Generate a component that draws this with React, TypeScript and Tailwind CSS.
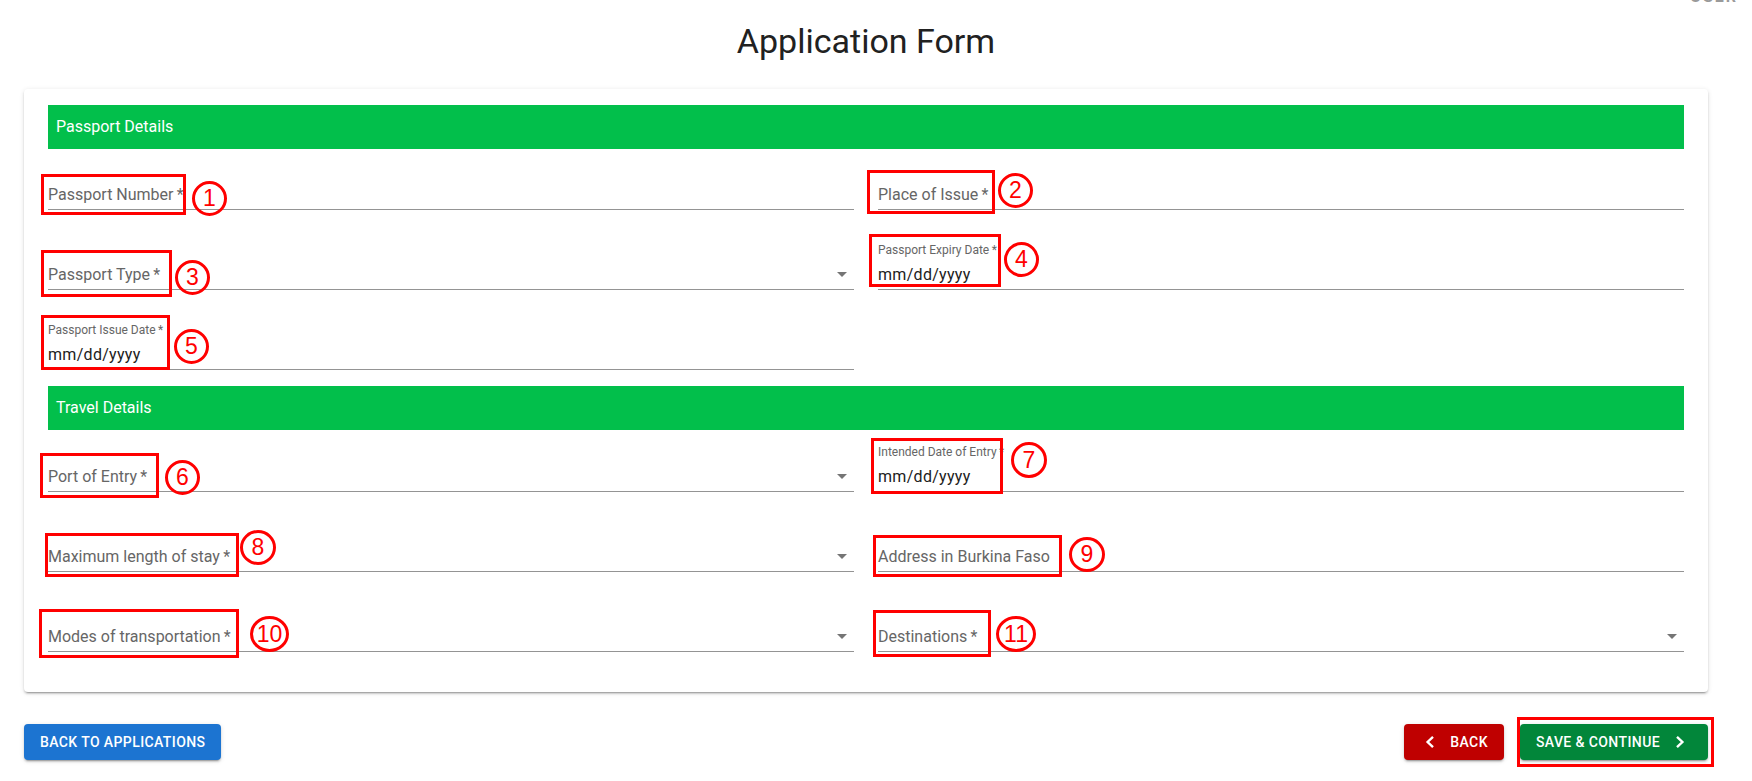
import React from "react";

type Box = { l: number; t: number; w: number; h: number };
type Circ = { l: number; t: number; w: number; h: number; n: string };

type FieldProps = {
  label: string;
  kind: "text" | "select" | "date";
  box: Box;
  circ: Circ;
};

function Field({ label, kind, box, circ }: FieldProps) {
  return (
    <div className="relative h-[61px] border-b border-[#949494] flex flex-col justify-end pb-[3px]">
      {kind === "date" && (
        <div className="text-[12px] leading-[14px] text-[#666666] mb-[6px] whitespace-nowrap">
          {label}
          {"\u2009*"}
        </div>
      )}
      <div className="flex items-center justify-between h-[23px] leading-[23px] text-[16px]">
        {kind === "date" ? (
          <span className="text-[#212121] tracking-[0.3px]">mm/dd/yyyy</span>
        ) : (
          <span className="text-[#666666] whitespace-nowrap">
            {label}
            {label !== "Address in Burkina Faso" ? "\u2009*" : ""}
          </span>
        )}
        {kind === "select" && (
          <svg width="10" height="5" viewBox="0 0 10 5" className="mr-[7px]">
            <path d="M0 0 L10 0 L5 5 Z" fill="rgba(0,0,0,0.54)" />
          </svg>
        )}
      </div>
      <div
        className="absolute border-[3px] border-[#ff0000] pointer-events-none"
        style={{ left: box.l, top: box.t, width: box.w, height: box.h }}
      />
      <div
        className="absolute rounded-[50%] border-[3px] border-[#ff0000] flex items-center justify-center text-[#ff0000] text-[23px] leading-none font-['Liberation_Sans',Arial,sans-serif] pointer-events-none"
        style={{ left: circ.l, top: circ.t, width: circ.w, height: circ.h }}
      >
        {circ.n}
      </div>
    </div>
  );
}

function Band({ title, className = "" }: { title: string; className?: string }) {
  return (
    <div className={"h-[44px] bg-[#02bf4b] flex items-center pl-2 text-white text-[16px] " + className}>
      {title}
    </div>
  );
}

const shadow =
  "shadow-[0px_3px_1px_-2px_rgba(0,0,0,0.2),0px_2px_2px_0px_rgba(0,0,0,0.14),0px_1px_5px_0px_rgba(0,0,0,0.12)]";

export default function App() {
  return (
    <div className="min-h-screen w-full bg-white font-['Roboto',sans-serif]">
      <div className="flex justify-end pr-[14px] h-[5px] overflow-hidden">
        <div className="-mt-[11px] text-[16px] leading-[16px] font-bold text-[#9a9a9a] tracking-[2px]">
          USER
        </div>
      </div>
      <div className="pl-6 pr-[44px]">
        <h1 className="mt-[15px] text-center text-[34px] leading-[42px] text-[#212121] font-normal">
          Application Form
        </h1>
        <div className={"mt-[27px] bg-white rounded-[4px] px-6 pt-4 pb-10 " + shadow}>
          <Band title="Passport Details" />
          <div className="grid grid-cols-2 gap-x-6 gap-y-[19px]">
            <Field
              label="Passport Number"
              kind="text"
              box={{ l: -7, t: 25, w: 145, h: 41 }}
              circ={{ l: 144, t: 32, w: 35, h: 35, n: "1" }}
            />
            <Field
              label="Place of Issue"
              kind="text"
              box={{ l: -11, t: 21, w: 128, h: 44 }}
              circ={{ l: 120, t: 24, w: 35, h: 35, n: "2" }}
            />
            <Field
              label="Passport Type"
              kind="select"
              box={{ l: -7, t: 21, w: 131, h: 47 }}
              circ={{ l: 127, t: 31, w: 35, h: 35, n: "3" }}
            />
            <Field
              label="Passport Expiry Date"
              kind="date"
              box={{ l: -9, t: 5, w: 132, h: 53 }}
              circ={{ l: 126, t: 13, w: 35, h: 35, n: "4" }}
            />
            <Field
              label="Passport Issue Date"
              kind="date"
              box={{ l: -7, t: 6, w: 129, h: 55 }}
              circ={{ l: 126, t: 20, w: 35, h: 35, n: "5" }}
            />
            <div />
          </div>
          <Band title="Travel Details" className="mt-4" />
          <div className="grid grid-cols-2 gap-x-6 gap-y-[19px] pt-px">
            <Field
              label="Port of Entry"
              kind="select"
              box={{ l: -8, t: 22, w: 119, h: 45 }}
              circ={{ l: 117, t: 29, w: 35, h: 35, n: "6" }}
            />
            <Field
              label="Intended Date of Entry"
              kind="date"
              box={{ l: -7, t: 7, w: 132, h: 56 }}
              circ={{ l: 133, t: 11, w: 36, h: 36, n: "7" }}
            />
            <Field
              label="Maximum length of stay"
              kind="select"
              box={{ l: -3, t: 22, w: 194, h: 44 }}
              circ={{ l: 192, t: 19, w: 36, h: 35, n: "8" }}
            />
            <Field
              label="Address in Burkina Faso"
              kind="text"
              box={{ l: -5, t: 24, w: 189, h: 42 }}
              circ={{ l: 191, t: 26, w: 36, h: 35, n: "9" }}
            />
            <Field
              label="Modes of transportation"
              kind="select"
              box={{ l: -9, t: 18, w: 200, h: 49 }}
              circ={{ l: 202, t: 25, w: 39, h: 36, n: "10" }}
            />
            <Field
              label="Destinations"
              kind="select"
              box={{ l: -5, t: 19, w: 118, h: 47 }}
              circ={{ l: 118, t: 25, w: 40, h: 36, n: "11" }}
            />
          </div>
        </div>

        <div className="mt-8 flex items-center justify-between">
          <button className={"h-9 px-4 rounded-[4px] bg-[#1c74d1] text-white text-[14px] font-medium uppercase tracking-[0.4px] " + shadow}>
            Back to Applications
          </button>
          <div className="flex items-center gap-4">
            <button className={"h-9 pl-[18px] pr-4 rounded-[4px] bg-[#bf0000] text-white text-[14px] font-medium uppercase tracking-[0.4px] flex items-center " + shadow}>
              <svg width="16" height="16" viewBox="0 0 16 16">
                <path d="M11 2.8 L5.6 8 L11 13.2" fill="none" stroke="white" strokeWidth="2.4" />
              </svg>
              <span className="ml-3">Back</span>
            </button>
            <div className="relative">
              <button className={"h-9 pl-4 pr-5 rounded-[4px] bg-[#02863a] text-white text-[14px] font-medium uppercase tracking-[0.4px] flex items-center " + shadow}>
                <span>Save &amp; Continue</span>
                <svg width="16" height="16" viewBox="0 0 16 16" className="ml-3">
                  <path d="M5 2.8 L10.4 8 L5 13.2" fill="none" stroke="white" strokeWidth="2.4" />
                </svg>
              </button>
              <div className="absolute -left-[3px] -top-[7px] -right-[6px] -bottom-[7px] border-[3px] border-[#ff0000] pointer-events-none" />
            </div>
          </div>
        </div>
      </div>
    </div>
  );
}
